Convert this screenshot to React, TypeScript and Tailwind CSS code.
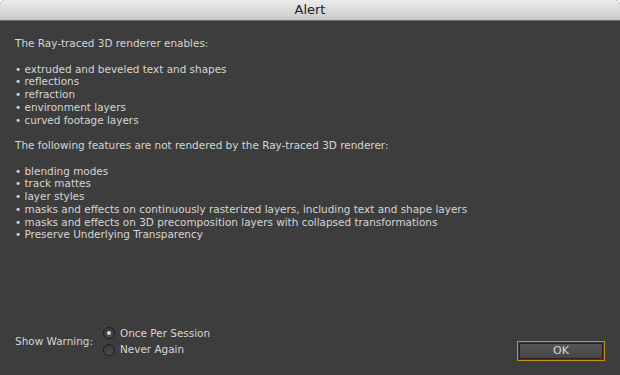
import React from "react";

const font = { fontFamily: '"Lucida Grande", "DejaVu Sans", sans-serif' };

export default function App() {
  const enabled = [
    "extruded and beveled text and shapes",
    "reflections",
    "refraction",
    "environment layers",
    "curved footage layers",
  ];
  const notRendered = [
    "blending modes",
    "track mattes",
    "layer styles",
    "masks and effects on continuously rasterized layers, including text and shape layers",
    "masks and effects on 3D precomposition layers with collapsed transformations",
    "Preserve Underlying Transparency",
  ];
  return (
    <div className="w-[620px] h-[375px] flex flex-col bg-[#3d3d3d] overflow-hidden rounded-t-[5px]" style={font}>
      <div className="h-[21px] shrink-0 flex items-center justify-center bg-gradient-to-b from-[#ececec] to-[#c9c9c9] border-b border-[#6a6a6a] text-[13px] text-[#222]">
        Alert
      </div>
      <div className="flex-1 flex flex-col px-[15px] pt-[16px] text-[10.45px] leading-[12.75px] text-[#d6d6d6]">
        <div>The Ray-traced 3D renderer enables:</div>
        <div className="h-[12.75px]" />
        {enabled.map((t) => (
          <div key={t}>• {t}</div>
        ))}
        <div className="h-[12.75px]" />
        <div>The following features are not rendered by the Ray-traced 3D renderer:</div>
        <div className="h-[12.75px]" />
        {notRendered.map((t) => (
          <div key={t}>• {t}</div>
        ))}
        <div className="flex-1" />
        <div className="flex items-end justify-between pb-[14px]">
          <div className="flex items-center pb-[5px]">
            <div className="w-[88px]">Show Warning:</div>
            <div className="flex flex-col gap-[4px]">
              <div className="flex items-center gap-[5px]">
                <div className="w-[12px] h-[12px] rounded-full border border-[#1e1e1e] bg-gradient-to-b from-[#3a3a3a] to-[#4c4c4c] flex items-center justify-center">
                  <div className="w-[4px] h-[4px] rounded-full bg-[#d8d8d8]" />
                </div>
                <span>Once Per Session</span>
              </div>
              <div className="flex items-center gap-[5px]">
                <div className="w-[12px] h-[12px] rounded-full border border-[#1e1e1e] bg-gradient-to-b from-[#3a3a3a] to-[#4c4c4c]" />
                <span>Never Again</span>
              </div>
            </div>
          </div>
          <div className="w-[88px] h-[20px] border border-[#c8900c] p-[1px]">
            <div className="w-full h-full border border-[#222] bg-gradient-to-b from-[#555] to-[#464646] flex items-center justify-center text-[11px] text-[#d8d8d8]">
              OK
            </div>
          </div>
        </div>
      </div>
    </div>
  );
}
